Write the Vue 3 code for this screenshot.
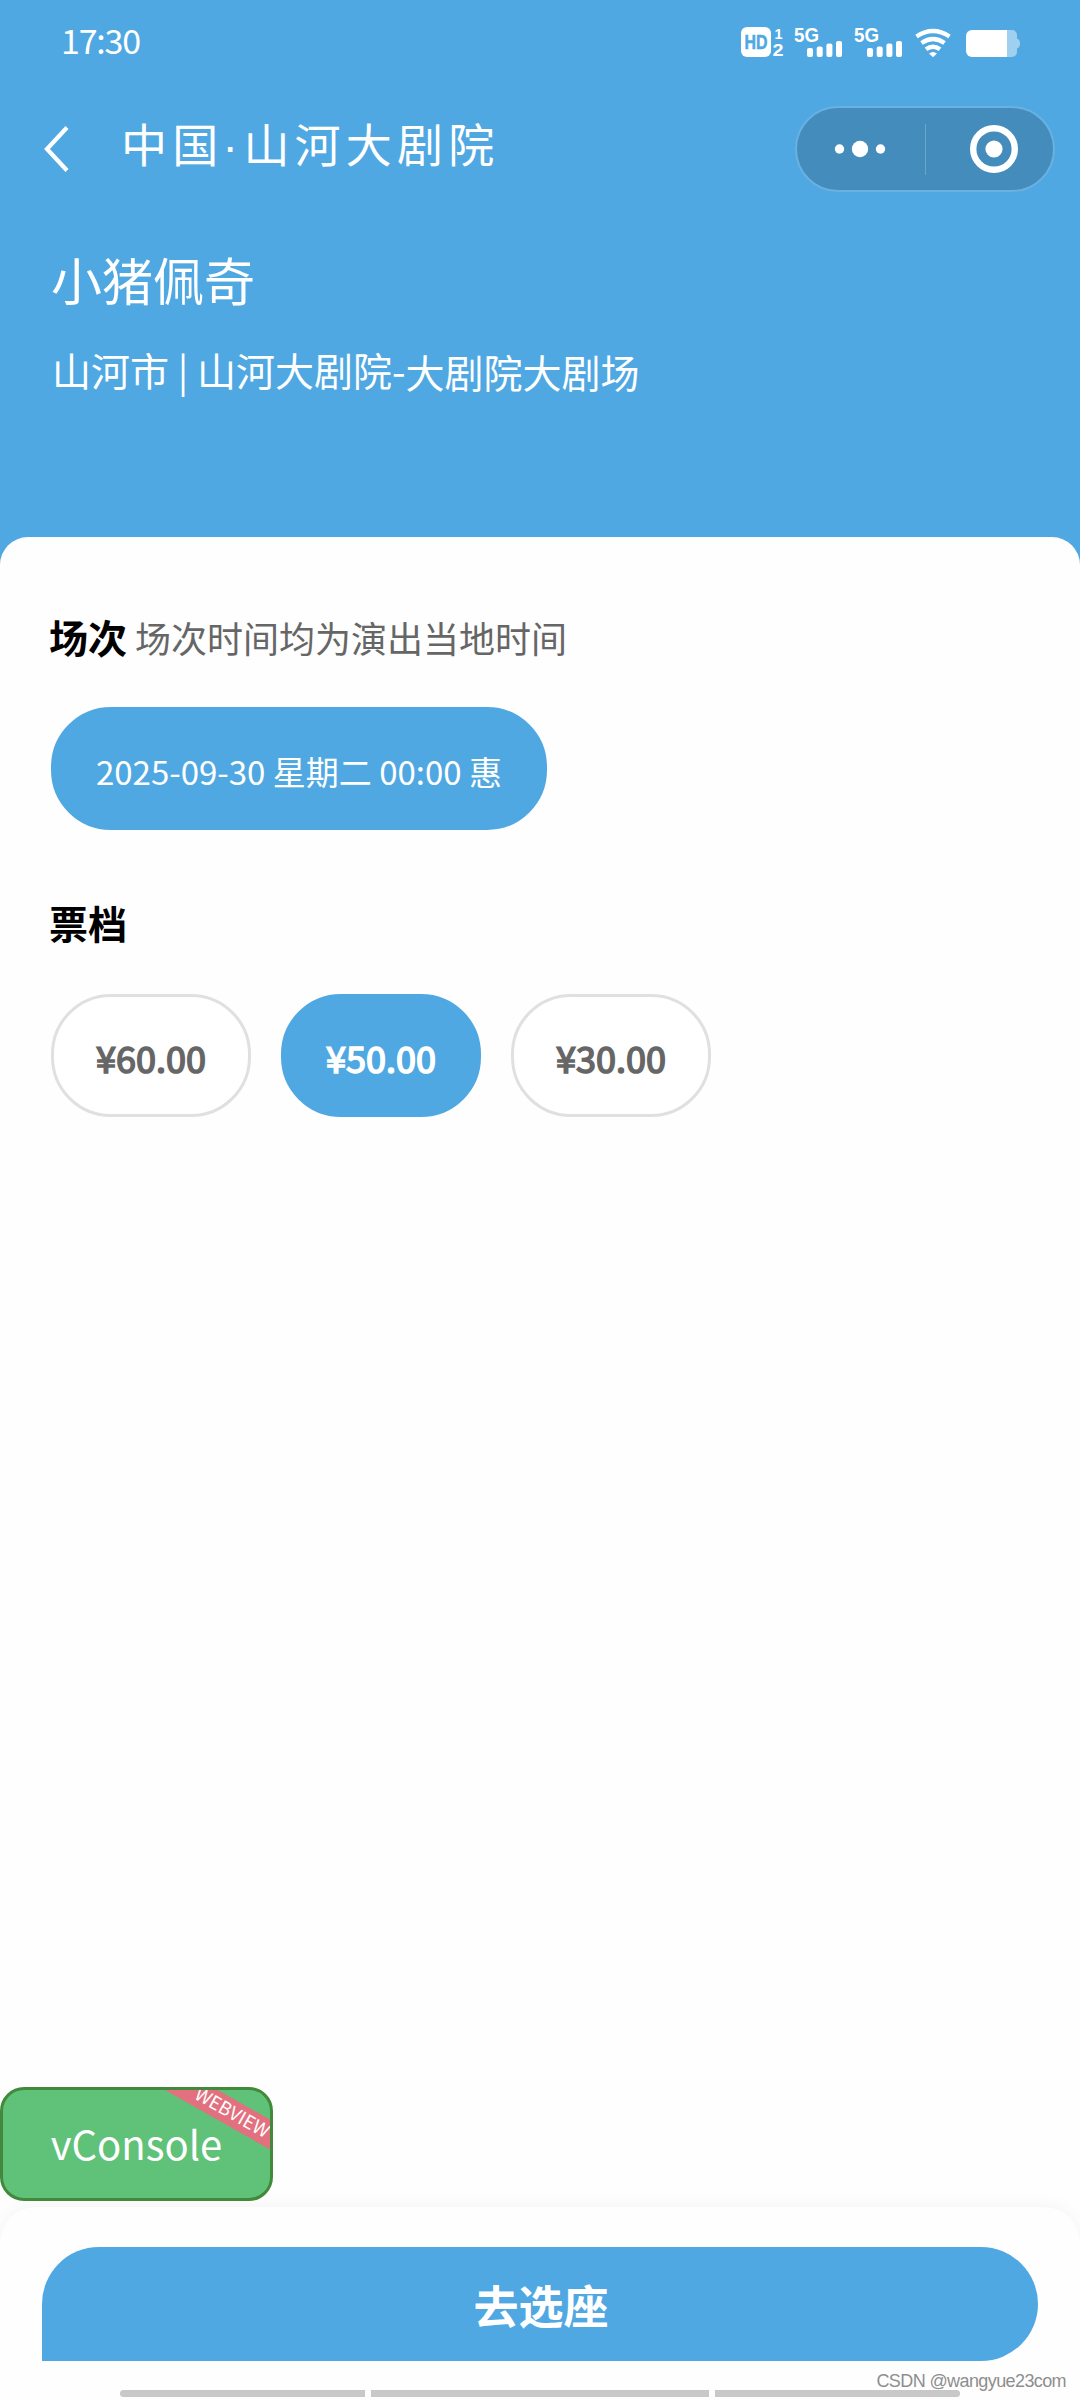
<template>
  <div class="page">
    <header class="hero">
      <div class="status-bar">
        <span class="status-bar__time">17:30</span>
        <svg class="status-bar__icons" width="282" height="32" viewBox="740 26 282 32" xmlns="http://www.w3.org/2000/svg">
          <rect x="741" y="27" width="30" height="30" rx="6" fill="#fff"/>
          <text class="status-bar__label" x="744.500" y="49" font-size="19.500" textLength="23" lengthAdjust="spacingAndGlyphs" fill="#50a8e2" stroke="#50a8e2" stroke-width="0.500">HD</text>
          <text class="status-bar__label" x="774.500" y="38.500" font-size="15.500" textLength="8" lengthAdjust="spacingAndGlyphs" fill="#fff">1</text>
          <text class="status-bar__label" x="772.500" y="56" font-size="16" textLength="11" lengthAdjust="spacingAndGlyphs" fill="#fff">2</text>
          <g v-for="x in signals" :key="x" :transform="`translate(${x} 0)`" fill="#fff">
            <text class="status-bar__label" x="-1" y="41.500" font-size="19.500" textLength="25" lengthAdjust="spacingAndGlyphs">5G</text>
            <rect x="12" y="48" width="6" height="9" rx="2"/>
            <rect x="21.700" y="46.500" width="6" height="10.500" rx="2"/>
            <rect x="31.400" y="43.500" width="6" height="13.500" rx="2"/>
            <rect x="41" y="41" width="6" height="16" rx="2"/>
          </g>
          <g fill="none" stroke="#fff" stroke-width="4.400">
            <path d="M916.500 36.500Q933 25.500 949.500 36.500"/>
            <path d="M921.500 43Q933 35 944.500 43"/>
            <path d="M926 49.300Q933 44 940 49.300"/>
          </g>
          <path d="M929 53.500Q933 50.500 937 53.500L933 57.200Z" fill="#fff"/>
          <path d="M1007 30h5a5 5 0 0 1 5 5v3.500q3 1 3 5t-3 5v3.500a5 5 0 0 1-5 5h-5z" fill="#a0d0f0"/>
          <path d="M1007 30h-35a6 6 0 0 0-6 6v15a6 6 0 0 0 6 6h35z" fill="#fff"/>
        </svg>
      </div>

      <nav class="nav-bar">
        <svg class="nav-bar__back" width="26" height="48" viewBox="0 0 26 48" fill="none" xmlns="http://www.w3.org/2000/svg">
          <path d="M23 2.500L3 24L23 45.500" stroke="#fff" stroke-width="4.200"/>
        </svg>
        <h1 class="nav-bar__title">中国<span class="nav-bar__dot">·</span>山河大剧院</h1>
        <div class="capsule">
          <div class="capsule__half">
            <svg width="52" height="18" viewBox="0 0 52 18" fill="#fff" xmlns="http://www.w3.org/2000/svg">
              <circle cx="5.500" cy="9" r="4.700"/>
              <circle cx="26" cy="9" r="8.200"/>
              <circle cx="46.500" cy="9" r="4.700"/>
            </svg>
          </div>
          <div class="capsule__half capsule__half--close">
            <svg width="50" height="50" viewBox="0 0 50 50" fill="none" xmlns="http://www.w3.org/2000/svg">
              <circle cx="25" cy="25" r="20.800" stroke="#fff" stroke-width="6.400"/>
              <circle cx="25" cy="25" r="8.600" fill="#fff"/>
            </svg>
          </div>
        </div>
      </nav>

      <div class="show">
        <h2 class="show__title">小猪佩奇</h2>
        <p class="show__place">山河市 | 山河大剧院-<span class="show__hall">大剧院大剧场</span></p>
      </div>
    </header>

    <main class="content">
      <div class="section-head">
        <h3 class="section-head__title">场次</h3>
        <span class="section-head__note">场次时间均为演出当地时间</span>
      </div>
      <button class="pill pill--session pill--active">2025-09-30 星期二 00:00 惠</button>

      <div class="section-head section-head--price">
        <h3 class="section-head__title">票档</h3>
      </div>
      <div class="prices">
        <button
            v-for="price in prices"
            :key="price"
            class="pill pill--price"
            :class="{ 'pill--active': price === selected }"
            @click="selected = price"
        >¥{{ price }}</button>
      </div>
    </main>

    <div class="vconsole">
      <span class="vconsole__text">vConsole</span>
      <span class="vconsole__ribbon">WEBVIEW</span>
    </div>

    <footer class="footer">
      <button class="footer__button">去选座</button>
      <div class="footer__bars">
        <span class="footer__bar footer__bar--first"></span>
        <span class="footer__bar footer__bar--middle"></span>
        <span class="footer__bar footer__bar--last"></span>
      </div>
      <span class="watermark">CSDN @wangyue23com</span>
    </footer>
  </div>
</template>

<script setup>
import { ref } from 'vue'

const signals = [795, 855]
const prices = ['60.00', '50.00', '30.00']
const selected = ref('50.00')
</script>

<style>
body {
  background: #fefefe;
}
</style>

<style scoped>
.page {
  position: relative;
  display: flex;
  flex-direction: column;
  height: 2400px;
  overflow: hidden;
  background: #50a8e2;
  font-family: "Noto Sans CJK SC", sans-serif;
}

h1, h2, h3, p {
  margin: 0;
  font-weight: 400;
}

button {
  border: none;
  font-family: inherit;
  cursor: pointer;
}

.hero {
  height: 537px;
  flex-shrink: 0;
  color: #fff;
}

/* status bar */
.status-bar {
  display: flex;
  justify-content: space-between;
  align-items: center;
  height: 84px;
  padding: 0 58px 0 61px;
  box-sizing: border-box;
}

.status-bar__time {
  font-size: 34px;
  line-height: 40px;
  letter-spacing: -1.2px;
  margin-top: -5px;
}

.status-bar__icons {
  overflow: visible;
}

.status-bar__label {
  font-family: "Liberation Sans", sans-serif;
  font-weight: 700;
}

/* mini program nav */
.nav-bar {
  display: flex;
  align-items: center;
  height: 130px;
  padding: 0 25px 0 44px;
}

.nav-bar__title {
  flex: 1;
  margin-left: 51px;
  font-size: 46px;
  line-height: 60px;
  letter-spacing: 5.2px;
  margin-top: -11px;
  white-space: nowrap;
}

.nav-bar__dot {
  display: inline-block;
  width: 20px;
  font-family: "Liberation Sans", sans-serif;
  letter-spacing: 0;
  text-indent: -1px;
}

.capsule {
  display: flex;
  align-items: center;
  width: 260px;
  height: 86px;
  box-sizing: border-box;
  border: 2px solid #68b1e1;
  border-radius: 43px;
  background: #448cbb;
}

.capsule__half {
  display: flex;
  align-items: center;
  justify-content: center;
  width: 129px;
  height: 51px;
  box-sizing: border-box;
  padding-right: 2px;
  border-right: 1px solid #6aa5cb;
}

.capsule__half--close {
  width: 127px;
  border-right: none;
  padding: 0 0 0 8px;
}

/* show info */
.show {
  padding: 35px 51px 0;
}

.show__title {
  font-size: 51px;
  line-height: 60px;
}

.show__place {
  margin: 33px 0 0 1px;
  font-size: 39px;
  line-height: 54px;
  white-space: nowrap;
}

.show__hall {
  position: relative;
  top: 2px;
}

/* sheet */
.content {
  flex: 1;
  padding: 72px 51px 0;
  border-radius: 28px 28px 0 0;
  background: #fefefe;
}

.section-head {
  display: flex;
  align-items: baseline;
  height: 54px;
  margin-left: -2px;
}

.section-head--price {
  margin-top: 65px;
}

.section-head__title {
  font-size: 39px;
  line-height: 54px;
  font-weight: 700;
  color: #000;
}

.section-head__note {
  margin-left: 8px;
  font-size: 36px;
  line-height: 54px;
  color: #666;
}

.pill {
  display: block;
  height: 123px;
  padding: 4px 0 0;
  box-sizing: border-box;
  border: 3px solid #e0e0e0;
  border-radius: 60px;
  background: #fff;
  color: #666;
  white-space: nowrap;
}

.pill--session {
  width: 496px;
  margin-top: 44px;
  font-size: 33px;
}

/* stroked regular weight keeps the narrow digit widths */
.pill--price {
  width: 200px;
  padding-top: 2px;
  font-size: 36px;
  -webkit-text-stroke: 1.6px currentColor;
}

.pill--active {
  border-color: #50a8e2;
  background: #50a8e2;
  color: #fff;
}

.prices {
  display: flex;
  gap: 30px;
  margin-top: 45px;
}

/* debug switch */
.vconsole {
  position: absolute;
  left: 0;
  top: 2087px;
  z-index: 2;
  display: flex;
  width: 273px;
  height: 114px;
  box-sizing: border-box;
  align-items: center;
  justify-content: center;
  overflow: hidden;
  border: 3px solid #43893c;
  border-radius: 24px;
  background: #60c179;
  color: #fff;
}

.vconsole__text {
  margin-top: -2px;
  font-size: 40px;
  line-height: 48px;
}

.vconsole__ribbon {
  position: absolute;
  left: 154px;
  top: 10px;
  width: 150px;
  height: 26px;
  transform: rotate(29.5deg);
  background: #e3707f;
  font-size: 18.5px;
  line-height: 23px;
  text-align: center;
}

/* bottom bar */
.footer {
  position: relative;
  flex-shrink: 0;
  height: 193px;
  padding: 40px 42px 0;
  box-sizing: border-box;
  border-radius: 36px 36px 0 0;
  background: #fefefe;
  box-shadow: 0 0 18px rgba(0, 0, 0, 0.05), 0 -36px 0 #fefefe;
}

.footer__button {
  display: block;
  width: 100%;
  height: 114px;
  padding: 0 0 0 2px;
  border-radius: 57px 57px 57px 0;
  background: #50a8e2;
  color: #fff;
  font-size: 45px;
  font-weight: 700;
}

.footer__bars {
  display: flex;
  gap: 6px;
  margin: 29px 78px 0;
}

.footer__bar {
  height: 7px;
  background: #c8c8c8;
}

.footer__bar--first {
  width: 245px;
  border-radius: 4px 0 0 4px;
}

.footer__bar--middle {
  width: 338px;
}

.footer__bar--last {
  width: 245px;
  border-radius: 0 4px 4px 0;
}

.watermark {
  position: absolute;
  right: 14px;
  bottom: 8px;
  font-family: "Liberation Sans", sans-serif;
  font-size: 18px;
  line-height: 22px;
  letter-spacing: -0.6px;
  color: #8e8e8e;
}
</style>
